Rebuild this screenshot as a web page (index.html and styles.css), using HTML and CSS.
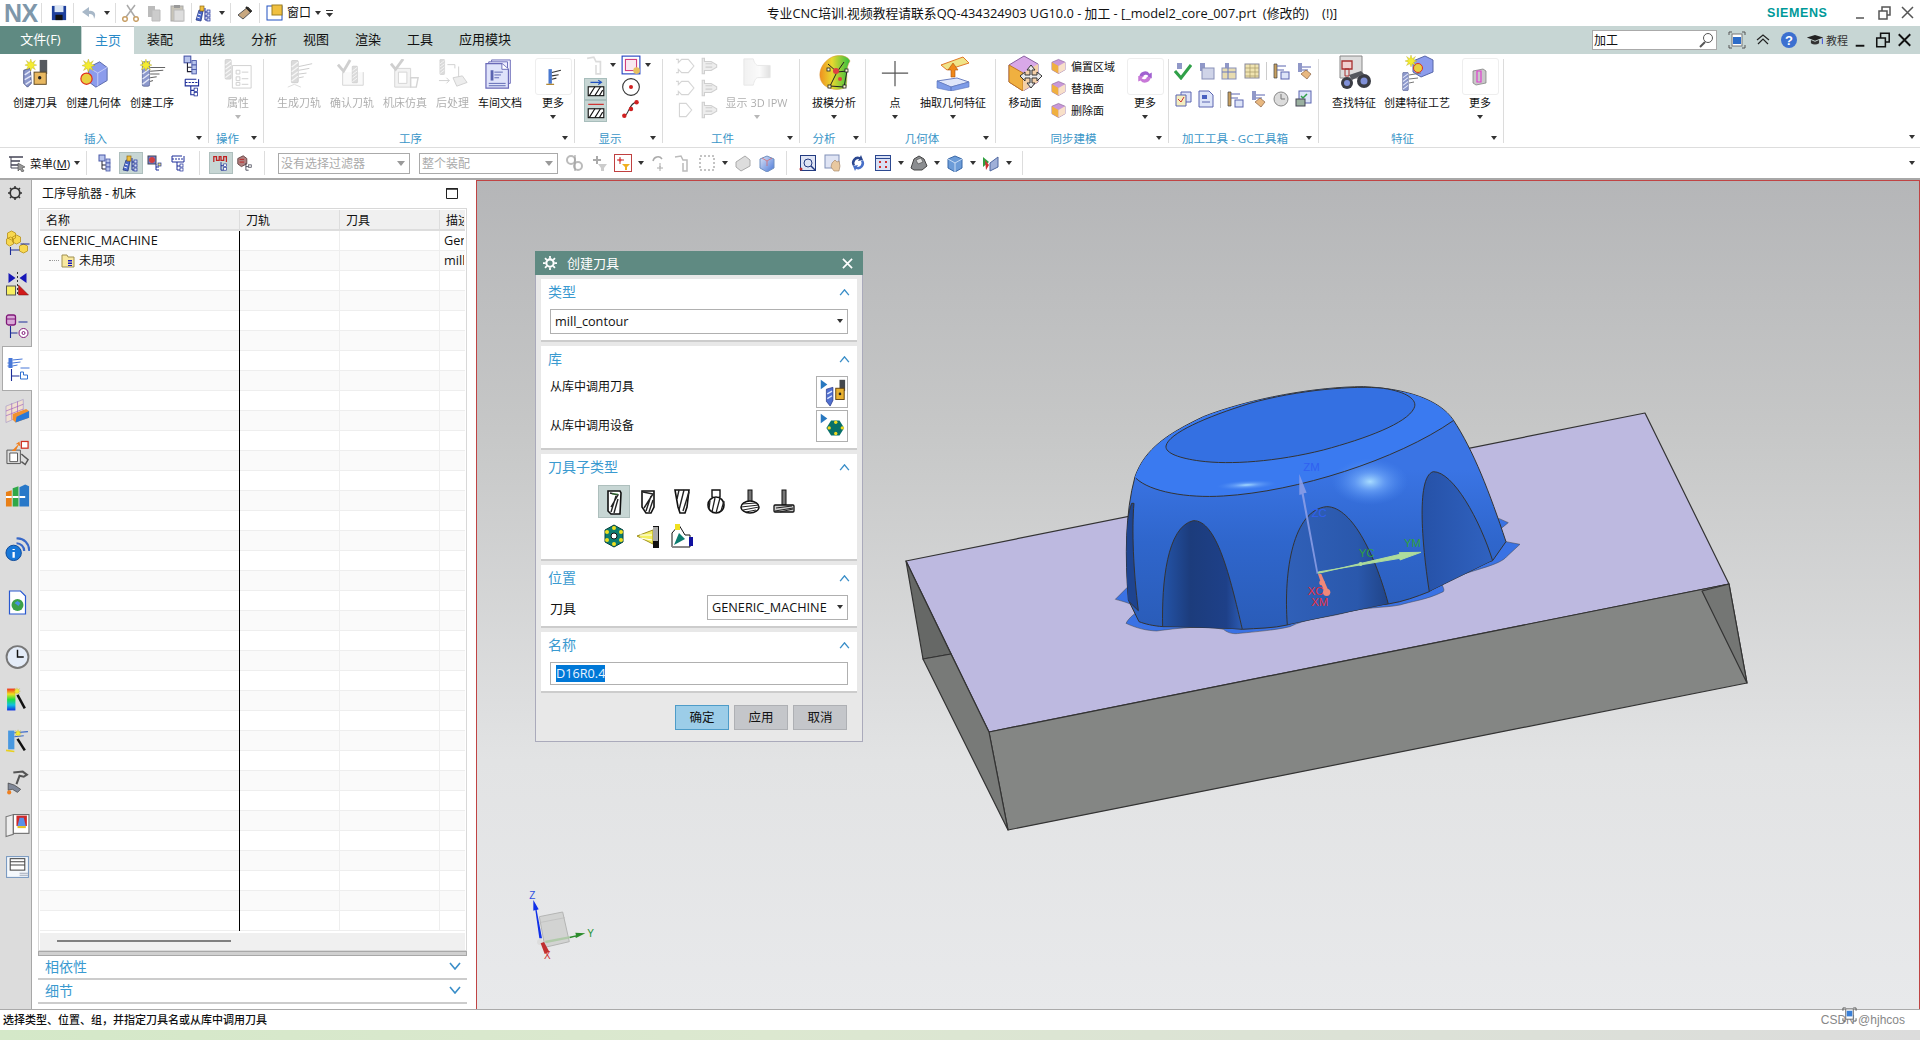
FILE: index.html
```html
<!DOCTYPE html>
<html lang="zh">
<head>
<meta charset="utf-8">
<title>NX</title>
<link rel="stylesheet" href="styles.css">
</head>
<body>
<svg class="defs" width="0" height="0">
  <defs>
    <linearGradient id="gSteel" x1="0" y1="0" x2="1" y2="0"><stop offset="0" stop-color="#d8d8d8"/><stop offset=".6" stop-color="#f4f4f4"/><stop offset="1" stop-color="#a8a8a8"/></linearGradient>
    <linearGradient id="gRain" x1="0" y1="0" x2="0" y2="1"><stop offset="0" stop-color="#f03020"/><stop offset=".25" stop-color="#f0e020"/><stop offset=".5" stop-color="#20e040"/><stop offset=".75" stop-color="#10c0e0"/><stop offset="1" stop-color="#1030e0"/></linearGradient>
    <linearGradient id="gDraft" x1="0" y1="0" x2="1" y2="0"><stop offset="0" stop-color="#f09020"/><stop offset=".4" stop-color="#e8d830"/><stop offset="1" stop-color="#30c040"/></linearGradient>
    <linearGradient id="gCube" x1="0" y1="0" x2="1" y2="1"><stop offset="0" stop-color="#dfe6f8"/><stop offset="1" stop-color="#4a78d8"/></linearGradient>
    <symbol id="star" viewBox="0 0 16 16"><path d="M8 0l1.6 5L14 2l-2.500 4.400L16 8l-4.500 1.500L14 14l-4.400-2.500L8 16l-1.600-4.500L2 14l2.500-4.500L0 8l4.500-1.600L2 2l4.400 3z" fill="#f4ec30" stroke="#a89a18" stroke-width=".4"/></symbol>
    <symbol id="drill" viewBox="0 0 10 30"><rect x=".5" y=".5" width="9" height="29" rx="2" fill="#8c98cc" stroke="#4c5688" stroke-width=".8"/><path d="M1 9l8-6M1 15l8-6M1 21l8-6M1 27l8-6" stroke="#e4e8f8" stroke-width="1.600"/></symbol>
    <symbol id="i-tool" viewBox="0 0 32 32"><path d="M4 12l7-2 1 16-4 4-4-4z" fill="#8c98cc" stroke="#4c5688"/><path d="M5 17l6-4M5 22l7-4M6 27l6-4" stroke="#e4e8f8" stroke-width="1.500"/><rect x="21" y="1" width="8" height="15" fill="#55595e"/><rect x="15" y="14" width="13" height="13" fill="#e8b860" stroke="#5a4520"/><circle cx="21" cy="20" r="1.800" fill="#222"/><use href="#star" x="5" y="0" width="13" height="13"/></symbol>
    <symbol id="i-geom" viewBox="0 0 32 32"><path d="M10 9l12-6 8 6v14l-12 7-8-6z" fill="#8c9cec" stroke="#5666a8"/><path d="M10 9l10 6 10-6M20 15v14" stroke="#c8d0f8" fill="none"/><circle cx="8" cy="21" r="6" fill="#e8d040" stroke="#e03020" stroke-width="1.300"/><use href="#star" x="3" y="0" width="14" height="14"/></symbol>
    <symbol id="i-oper" viewBox="0 0 32 32"><use href="#drill" x="5" y="2" width="9" height="28"/><path d="M14 9h16M14 13l14-1M14 16l10 0M14 20l7-1M14 24l3-1" stroke="#666" stroke-width="1.200" fill="none"/><use href="#star" x="3" y="0" width="13" height="13"/></symbol>
    <symbol id="i-props" viewBox="0 0 32 32"><use href="#drill" x="1" y="0" width="9" height="22"/><path d="M10 7h20v24H10z" fill="#fff" stroke="#777"/><path d="M14 12h4v4h-4zM14 19h4v4h-4zM14 25h4v3h-4zM20 14h7M20 21h7M20 27h7" stroke="#777" fill="none"/></symbol>
    <symbol id="i-gen" viewBox="0 0 32 32"><use href="#drill" x="7" y="1" width="9" height="25"/><path d="M16 8l14-3M16 12l11-2M16 16l8-1M16 20l5-1" stroke="#666" fill="none"/><path d="M4 30l7-3 7 3" stroke="#999" fill="none"/></symbol>
    <symbol id="i-verify" viewBox="0 0 32 32"><path d="M6 14v14h22V14" fill="#eee" stroke="#888"/><path d="M1 6l6 7L14 1" stroke="#777" stroke-width="3" fill="none"/><use href="#drill" x="15" y="7" width="8" height="19"/></symbol>
    <symbol id="i-sim" viewBox="0 0 32 32"><path d="M5 10h17v20H5z" fill="#ddd" stroke="#888"/><path d="M9 14h9v12H9z" fill="#fff" stroke="#888"/><path d="M1 5l5 6L14 0" stroke="#777" stroke-width="3" fill="none"/><path d="M22 20h8l-2 10h-6z" fill="none" stroke="#888" stroke-width="1.500"/></symbol>
    <symbol id="i-post" viewBox="0 0 32 32"><use href="#drill" x="1" y="0" width="7" height="17"/><path d="M10 6h8v4M22 8v12M1 23h11l-3-3M12 23l-3 3" stroke="#777" fill="none"/><path d="M16 20l10-2 5 7-11 4z" fill="#ccc" stroke="#777"/></symbol>
    <symbol id="i-doc" viewBox="0 0 32 32"><path d="M7 1h20v25H7z" fill="#eef" stroke="#6a6ab8"/><path d="M4 3h20v25H4z" fill="#eef" stroke="#6a6ab8"/><path d="M1 5h17l7 6v20H1z" fill="#dfe3fa" stroke="#6a6ab8" stroke-width="1.300"/><path d="M18 5v6h7" fill="#fff" stroke="#6a6ab8"/><rect x="6" y="12" width="3" height="11" fill="#5a64b0"/><path d="M10 14h9M10 17h7M10 20h5M4 26h18M4 28.500h18" stroke="#5a64b0" fill="none"/></symbol>
    <symbol id="i-opsm" viewBox="0 0 16 16"><rect x="4" y="1" width="3" height="13" fill="#4878d0"/><path d="M7 4l8-2M7 7l6-1M7 10l4-1" stroke="#333" fill="none"/><path d="M2 14.500h7" stroke="#a87818"/></symbol>
    <symbol id="i-ipw" viewBox="0 0 32 32"><path d="M2 2h10c1 4 3 7 5 7h13v13H17c-2 0-4 3-5 8H2z" fill="url(#gSteel)" stroke="#bbb"/></symbol>
    <symbol id="i-draft" viewBox="0 0 36 36"><path d="M8 30C0 22 4 8 16 2c8-3 16-1 18 4-5 7-2 17-4 26-6 4-16 3-22-2z" fill="url(#gDraft)" stroke="#d89030" stroke-width=".5"/><path d="M12 9l9 8-7 14 14 1 3-16-10 1 7-10" fill="none" stroke="#222"/><g fill="#e04040"><circle cx="20" cy="16" r="3"/><circle cx="24" cy="24" r="2"/></g><g fill="#fffbd8" stroke="#222" stroke-width=".8"><rect x="11" y="13" width="3" height="3"/><rect x="29" y="14" width="3" height="3"/><rect x="12" y="30" width="3" height="3"/><rect x="27" y="30" width="3" height="3"/></g></symbol>
    <symbol id="i-point" viewBox="0 0 32 32"><path d="M16 2v27M2 15h28" stroke="#555" stroke-width="1.300"/></symbol>
    <symbol id="i-extract" viewBox="0 0 36 36"><path d="M6 10L28 2l6 6-22 7z" fill="#f0e488" stroke="#e07828"/><path d="M16 22v-7h-3l5-7 5 7h-3v7z" fill="#f08818" stroke="#a85010" stroke-width=".6"/><path d="M2 26l20-3 12 4-18 5z" fill="#dfe6fa" stroke="#6c80c0"/><path d="M2 26v7l14 3v-4zM16 32v4l18-4v-5z" fill="#7e9ce8" stroke="#5c74b8" stroke-width=".6"/></symbol>
    <symbol id="i-move" viewBox="0 0 36 36"><path d="M2 10L17 1l14 8v18L16 36 2 27z" fill="#d8a8e8" stroke="#8860a0"/><path d="M2 10l14 8v18L2 27z" fill="#f0b040" stroke="#c07820"/><path d="M16 18l15-9v18L16 36z" fill="#f4d0a8"/><g fill="#e8e8e8" stroke="#333"><path d="M24 10l4 5h-3v5h5v-3l5 4-5 5v-3h-5v5h3l-4 5-4-5h3v-5h-5v3l-5-5 5-4v3h5v-5h-3z"/></g></symbol>
    <symbol id="i-syncface" viewBox="0 0 16 16"><path d="M1 4l7-3 7 3v8l-7 4-7-4z" fill="#c898d8" stroke="#886098" stroke-width=".7"/><path d="M1 4l7 4v8l-7-4z" fill="#f0b040"/><path d="M8 8l7-4v8l-7 4z" fill="#f8e0c8"/></symbol>
    <symbol id="i-rot" viewBox="0 0 16 16"><path d="M3 8a5 5 0 0 1 9-3l2-1v5h-5l2-2a3 3 0 0 0-5 1z" fill="#a060d0"/><path d="M13 8a5 5 0 0 1-9 3l-2 1V7h5L5 9a3 3 0 0 0 5-1z" fill="#c878d8"/></symbol>
    <symbol id="i-find" viewBox="0 0 36 36"><path d="M4 1h22v22H4z" fill="#ddd" stroke="#888"/><path d="M6 6h10v8H6z" fill="#f0d0d0" stroke="#a83030" stroke-width="1.300"/><path d="M9 14h4v7H9z" fill="none" stroke="#a83030"/><circle cx="11" cy="28" r="6" fill="#3a3c44"/><circle cx="28" cy="26" r="7" fill="#3a3c44"/><circle cx="11" cy="28" r="3" fill="#8090d8"/><circle cx="28" cy="26" r="3.500" fill="#8090d8"/><path d="M13 20l12-4 3 3-12 6z" fill="#55585e"/></symbol>
    <symbol id="i-feat" viewBox="0 0 36 36"><path d="M14 6l12-5 8 4v12l-12 5-8-5z" fill="#8c9cec" stroke="#5666a8"/><circle cx="19" cy="13" r="4.500" fill="#e8d040" stroke="#e03020"/><use href="#star" x="6" y="0" width="12" height="12"/><use href="#drill" x="3" y="17" width="7" height="19"/><path d="M10 20l12-2M10 24l9-1M10 28l5-1" stroke="#777" fill="none"/></symbol>
    <symbol id="i-morefeat" viewBox="0 0 16 18"><path d="M1 3l10-2 3 2v12L4 17l-3-2z" fill="#c8c8c8" stroke="#777" stroke-width=".7"/><path d="M5 3h4v11H5z" fill="none" stroke="#e040d0" stroke-width="1.200"/></symbol>
    <symbol id="s-struct" viewBox="0 0 18 18"><rect x="1" y="1" width="6" height="6" fill="#b8c4ec" stroke="#4858a8"/><path d="M4 7v8h4M4 11h4" stroke="#223" fill="none"/><rect x="8" y="5" width="4" height="4" fill="#b8c4ec" stroke="#4858a8" stroke-width=".8"/><rect x="8" y="9" width="4" height="4" fill="#b8c4ec" stroke="#4858a8" stroke-width=".8"/><rect x="8" y="13" width="4" height="4" fill="#b8c4ec" stroke="#4858a8" stroke-width=".8"/></symbol>
    <symbol id="s-tree" viewBox="0 0 18 18"><path d="M1 16l3-10 4 1-2 10z" fill="#4a68c8" stroke="#1c2c78" stroke-width=".7"/><path d="M3 10l3 1M2 13l3 1" stroke="#eef"/><rect x="5" y="2" width="4" height="5" fill="#f0c040" stroke="#906810" stroke-width=".7"/><path d="M10 4v12h3M10 8h3M10 12h3" stroke="#1c2c98" fill="none"/><rect x="12" y="6" width="3" height="3" fill="#d8e0f8" stroke="#1c2c98" stroke-width=".7"/><rect x="12" y="10" width="3" height="3" fill="#d8e0f8" stroke="#1c2c98" stroke-width=".7"/><rect x="12" y="14" width="3" height="3" fill="#d8e0f8" stroke="#1c2c98" stroke-width=".7"/></symbol>
    <symbol id="s-geo" viewBox="0 0 18 18"><rect x="2" y="2" width="8" height="8" fill="#7080d8" stroke="#445"/><circle cx="6" cy="6" r="3" fill="#d04040"/><path d="M10 10v6h3M10 13h3" stroke="#1c2c98" fill="none"/><rect x="12" y="9" width="3" height="3" fill="#e8e070" stroke="#1c2c98" stroke-width=".7"/></symbol>
    <symbol id="s-meth" viewBox="0 0 18 18"><path d="M2 2h10M2 2v6h12V2" stroke="#1c2c98" fill="none"/><path d="M2 5h12" stroke="#1c2c98" stroke-dasharray="2 1"/><path d="M7 8v8h3M7 12h3" stroke="#1c2c98" fill="none"/><rect x="10" y="10" width="3" height="3" fill="#fff" stroke="#1c2c98" stroke-width=".7"/><rect x="10" y="14" width="3" height="3" fill="#fff" stroke="#1c2c98" stroke-width=".7"/></symbol>
    <symbol id="s-order" viewBox="0 0 20 20"><path d="M2 9V3h3v4h3V3h2v4h3V3h3v6" stroke="#c02020" stroke-width="1.400" fill="none"/><path d="M10 9v9h3M10 13h3" stroke="#1c2c98" fill="none"/><rect x="13" y="11" width="3" height="3" fill="#fff" stroke="#1c2c98" stroke-width=".7"/><rect x="13" y="15" width="3" height="3" fill="#fff" stroke="#1c2c98" stroke-width=".7"/></symbol>
    <symbol id="s-order2" viewBox="0 0 20 20"><path d="M2 5l6-3 4 3v6l-6 3-4-3z" fill="#b08080" stroke="#604040"/><path d="M4 6h5M4 9h5" stroke="#c02020"/><path d="M11 10v8h3M11 14h3" stroke="#445" fill="none"/><rect x="14" y="12" width="3" height="3" fill="#ddd" stroke="#445" stroke-width=".7"/></symbol>
    <symbol id="s-gears" viewBox="0 0 18 18"><circle cx="5" cy="6" r="4" fill="none" stroke="#bbb" stroke-width="2"/><circle cx="12" cy="12" r="4" fill="none" stroke="#bbb" stroke-width="2"/><path d="M9 1v16" stroke="#999"/></symbol>
    <symbol id="s-filter" viewBox="0 0 18 18"><path d="M7 2v8M3 6h8" stroke="#aaa" stroke-width="2"/><path d="M8 10h9l-3 4v3h-3v-3z" fill="#ccc"/></symbol>
    <symbol id="s-redfilter" viewBox="0 0 18 18"><rect x=".5" y=".5" width="17" height="17" fill="#fff" stroke="#c04040"/><path d="M6 3v7M3 6h7" stroke="#c03030"/><circle cx="6" cy="6" r="1.500" fill="#e04040"/><path d="M8 10h8l-3 3v3h-2v-3z" fill="#f0b020"/></symbol>
    <symbol id="s-rotate" viewBox="0 0 18 18"><path d="M3 7a5 5 0 0 1 9-2" fill="none" stroke="#aaa" stroke-width="1.500"/><path d="M10 12v5M7 14h6M10 9v4" stroke="#aaa"/></symbol>
    <symbol id="s-tool2" viewBox="0 0 18 18"><path d="M1 3l6-1 2 4 4 0v11h-4V9" fill="none" stroke="#bbb" stroke-width="1.500"/></symbol>
    <symbol id="s-rect" viewBox="0 0 18 18"><rect x="2" y="2" width="14" height="14" fill="none" stroke="#888" stroke-dasharray="2 2"/></symbol>
    <symbol id="s-cube" viewBox="0 0 18 18"><path d="M2 8l9-6 5 4v6l-9 5-5-4z" fill="#ddd" stroke="#aaa"/></symbol>
    <symbol id="s-cube2" viewBox="0 0 18 18"><path d="M2 5l7-3 7 3v9l-7 4-7-4z" fill="url(#gCube)" stroke="#7090c0"/><path d="M4 4l5 3 5-3M9 7v5" stroke="#e06060" stroke-width=".7" fill="none"/></symbol>
    <symbol id="s-zoomfit" viewBox="0 0 18 18"><rect x="1.500" y="1.500" width="15" height="15" fill="#dfe4f4" stroke="#223a80"/><circle cx="9" cy="9" r="4" fill="none" stroke="#223a80"/><path d="M12 12l4 4" stroke="#223a80" stroke-width="1.500"/><circle cx="2" cy="15" r="1.500" fill="#c03030"/></symbol>
    <symbol id="s-pan" viewBox="0 0 18 18"><rect x="1" y="1" width="14" height="13" fill="#dfe4f4" stroke="#8090b8"/><path d="M8 9l3-3 2 2 2-1 1 5-1 5h-5l-3-4z" fill="#e8c8a0" stroke="#a08060" stroke-width=".6"/></symbol>
    <symbol id="s-spin" viewBox="0 0 18 18"><path d="M4 12A6 6 0 0 1 11 3l1-2 2 5-5 1 1-2a4 4 0 0 0-4 6z" fill="#2c4890"/><path d="M14 6a6 6 0 0 1-7 9l-1 2-2-5 5-1-1 2a4 4 0 0 0 4-6z" fill="#4870c8"/></symbol>
    <symbol id="s-view" viewBox="0 0 18 18"><rect x="1.500" y="1.500" width="15" height="15" fill="#d8e0f4" stroke="#2c4890"/><path d="M1.500 4.500h15" stroke="#2c4890"/><g fill="#d03030"><rect x="5" y="7" width="2" height="2"/><rect x="11" y="7" width="2" height="2"/><rect x="5" y="12" width="2" height="2"/><rect x="11" y="12" width="2" height="2"/></g></symbol>
    <symbol id="s-shade" viewBox="0 0 18 18"><path d="M1 14l3-9 5-3 5 3 3 7-5 4H4z" fill="#8b8d90" stroke="#444"/><path d="M6 6l5-2 2 4-5 2z" fill="#dfdfdf" stroke="#444" stroke-width=".6"/></symbol>
    <symbol id="s-bcube" viewBox="0 0 18 18"><path d="M2 5l7-3 7 3v9l-7 4-7-4z" fill="#6c9cd8" stroke="#3868a8"/><path d="M2 5l7 4 7-4M9 9v9" stroke="#c8dcf4" fill="none"/></symbol>
    <symbol id="s-mirror" viewBox="0 0 18 18"><path d="M1 3l6 5-6 5z" fill="#30a040"/><path d="M3 6l4 5-3 5z" fill="#d03030"/><path d="M8 9l8-6v10l-8 4z" fill="#a0b0d8" stroke="#5068a0"/></symbol>
    <symbol id="g-check" viewBox="0 0 18 18"><rect x="3" y="1" width="5" height="6" fill="#9098c8"/><path d="M1 9l6 7L17 3" fill="none" stroke="#30a048" stroke-width="3"/></symbol>
    <symbol id="g-a" viewBox="0 0 18 18"><rect x="3" y="1" width="5" height="8" fill="#9098c8"/><rect x="5" y="6" width="12" height="11" fill="#cfd4e8" stroke="#8890b8"/></symbol>
    <symbol id="g-b" viewBox="0 0 18 18"><rect x="5" y="1" width="4" height="8" fill="#9098c8"/><rect x="2" y="6" width="14" height="11" fill="#e8dcb0" stroke="#8890b8"/><path d="M2 10h14M8 6v11" stroke="#6878c0"/></symbol>
    <symbol id="g-c" viewBox="0 0 18 18"><rect x="2" y="2" width="14" height="14" fill="#f0e4b0" stroke="#889"/><path d="M2 6h14M2 10h14M2 14h14M7 2v14M12 2v14" stroke="#a89868" stroke-width=".7"/></symbol>
    <symbol id="g-d" viewBox="0 0 18 18"><path d="M7 2h10v10H7z" fill="#dfe3f8" stroke="#5a64b0"/><path d="M2 5h10v11H2z" fill="#f4eec0" stroke="#5a64b0"/><path d="M4 9l3 3 3-5" stroke="#d03030" fill="none"/></symbol>
    <symbol id="g-e" viewBox="0 0 18 18"><path d="M2 1h10l4 4v12H2z" fill="#dde4f8" stroke="#5a64b0"/><rect x="5" y="5" width="5" height="4" fill="#4860c0"/><path d="M5 12h8" stroke="#5a64b0"/></symbol>
    <symbol id="g-f" viewBox="0 0 18 18"><path d="M2 2h3v14H2z" fill="#c8a060" stroke="#444" stroke-width=".7"/><path d="M5 4h9M5 8h7" stroke="#5a64b0"/><rect x="9" y="10" width="8" height="7" fill="#dde4f8" stroke="#5a64b0"/></symbol>
    <symbol id="g-g" viewBox="0 0 18 18"><rect x="3" y="1" width="4" height="9" fill="#9098c8"/><path d="M7 5h9M7 8h6" stroke="#5a64b0"/><path d="M6 12l5-4 5 4-4 5z" fill="#e8b880" stroke="#886040" stroke-width=".7"/></symbol>
    <symbol id="g-h" viewBox="0 0 18 18"><circle cx="9" cy="9" r="7" fill="#dcdcdc" stroke="#888"/><path d="M9 4v5h4" stroke="#777" fill="none"/></symbol>
    <symbol id="g-i" viewBox="0 0 18 18"><rect x="4" y="1" width="12" height="12" fill="#dde4f8" stroke="#5a64b0"/><path d="M6 6l2 2 4-4" stroke="#30a048" stroke-width="1.500" fill="none"/><rect x="1" y="9" width="9" height="7" fill="#9ab0a0" stroke="#445"/></symbol>
    <symbol id="d-lib1" viewBox="0 0 32 32"><path d="M4 3l7 5-7 5z" fill="#2878c0"/><path d="M10 13l7-2v14l-3 6-4-5z" fill="#5070d0" stroke="#203080" stroke-width=".7"/><path d="M11 18l5-3M11 23l5-3" stroke="#e0e8ff" stroke-width="1.400"/><rect x="24" y="3" width="6" height="12" fill="#44484c"/><rect x="20" y="12" width="9" height="12" fill="#e8b030" stroke="#604010"/><circle cx="24.500" cy="18" r="1.400" fill="#222"/></symbol>
    <symbol id="d-lib2" viewBox="0 0 32 32"><path d="M4 3l7 5-7 5z" fill="#2878c0"/><path d="M15 10h9l5 8-5 8h-9l-5-8z" fill="#087068"/><g fill="#f0d820"><circle cx="20" cy="12" r="1.800"/><circle cx="20" cy="24" r="1.800"/><circle cx="13" cy="18" r="1.800"/><circle cx="27" cy="18" r="1.800"/></g><circle cx="20" cy="18" r="2" fill="#087068"/></symbol>
    <symbol id="c1" viewBox="0 0 24 26"><path d="M6 2h12l1 2-1 21H9L6 22z" fill="#fff" stroke="#111" stroke-width="1.600"/><path d="M8 4l8 2-7 12M14 7l-5 16M16 10l-4 14" stroke="#222" stroke-width="1.400" fill="none"/><path d="M10 5h6" stroke="#4a4" stroke-width=".8"/></symbol>
    <symbol id="c2" viewBox="0 0 24 26"><path d="M6 2h12v16l-3 6h-5l-4-6z" fill="#fff" stroke="#111" stroke-width="1.600"/><path d="M7 3l10 2-9 14M15 7l-5 15M17 11l-4 12" stroke="#222" stroke-width="1.400" fill="none"/></symbol>
    <symbol id="c3" viewBox="0 0 24 26"><path d="M5 1h14l-2 17-2 6h-5l-2-6z" fill="#fff" stroke="#111" stroke-width="1.600"/><path d="M9 1L7 10M14 1L9 21M19 3L13 22" stroke="#222" stroke-width="1.400" fill="none"/></symbol>
    <symbol id="c4" viewBox="0 0 24 26"><path d="M8 1h8v7l-4 2-4-2z" fill="#fff" stroke="#111" stroke-width="1.400"/><circle cx="12" cy="16" r="8" fill="#fff" stroke="#111" stroke-width="1.600"/><path d="M6 12l-1 8M11 9L8 23M16 9l-4 15M20 12l-3 10" stroke="#222" stroke-width="1.300" fill="none"/></symbol>
    <symbol id="c5" viewBox="0 0 24 26"><rect x="10" y="1" width="4" height="13" fill="#777" stroke="#111"/><ellipse cx="12" cy="18" rx="9" ry="6" fill="#fff" stroke="#111" stroke-width="1.500"/><path d="M4 15l14-1M3 18l18-2M5 21l16-3M8 23l10-2" stroke="#222" fill="none"/></symbol>
    <symbol id="c6" viewBox="0 0 24 26"><rect x="10" y="1" width="4" height="15" fill="#777" stroke="#111"/><rect x="2" y="16" width="20" height="7" rx="1" fill="#ccc" stroke="#111" stroke-width="1.300"/><path d="M4 19l16-2M3 22l18-3M8 23l13-3" stroke="#222" fill="none"/></symbol>
    <symbol id="c7" viewBox="0 0 24 26"><path d="M12 2l9 5v12l-9 5-9-5V7z" fill="#0c7c70" stroke="#064038"/><circle cx="12" cy="13" r="3" fill="#fff" stroke="#111"/><g fill="#f0e020"><circle cx="12" cy="5" r="2"/><circle cx="12" cy="21" r="2"/><circle cx="5" cy="9" r="2"/><circle cx="19" cy="9" r="2"/><circle cx="5" cy="17" r="2"/><circle cx="19" cy="17" r="2"/></g></symbol>
    <symbol id="c8" viewBox="0 0 24 26"><path d="M1 13l16-6v14z" fill="#f4f060" stroke="#a09020"/><rect x="17" y="3" width="6" height="22" fill="#111"/><rect x="17" y="4" width="5" height="14" fill="#aaa"/><path d="M4 12l12 0M4 15l12 2" stroke="#fff"/></symbol>
    <symbol id="c9" viewBox="0 0 24 26"><path d="M2 24V10l7-8 6 10h5v12z" fill="#fff" stroke="#111"/><path d="M9 10l6 6-11 6z" fill="#0c7c70"/><rect x="19" y="14" width="4" height="9" fill="#1010a0"/><rect x="5" y="1" width="5" height="6" fill="#f0e020"/><path d="M2 24h18" stroke="#888" stroke-width="2" stroke-dasharray="1 1"/></symbol>
    <symbol id="r-a" viewBox="0 0 24 26"><g fill="#f8d850" stroke="#b89018" stroke-width=".8"><path d="M2 4l4-2 4 2v5l-4 2-4-2zM7 8l4-2 4 2v5l-4 2-4-2zM1 10l4-2 3 2v5l-4 2-3-2z"/><path d="M14 17l4-2 4 2v5l-4 2-4-2z"/></g><path d="M5 18v8M5 21h9M15 15h9" stroke="#1c2c98" stroke-width="1.100" fill="none"/></symbol>
    <symbol id="r-b" viewBox="0 0 24 26"><path d="M3 2l7 5-7 5zM21 2l-7 5 7 5z" fill="#1818b8"/><rect x="1" y="15" width="9" height="9" fill="#f8f060" stroke="#555"/><path d="M13 14l10 10H13z" fill="#d01818" stroke="#701010" stroke-width=".5"/><path d="M12 1v24" stroke="#333" stroke-dasharray="2 2"/></symbol>
    <symbol id="r-c" viewBox="0 0 24 26"><rect x="1" y="2" width="9" height="10" rx="2" fill="#d8a8d8" stroke="#801878" stroke-width="1.300"/><path d="M1 6h9" stroke="#801878"/><path d="M5 13v12M5 20h7M13 9h9" stroke="#1c2c98" stroke-width="1.100" fill="none"/><circle cx="18" cy="20" r="4.500" fill="#fff" stroke="#801878"/><circle cx="18" cy="20" r="1.500" fill="none" stroke="#801878"/></symbol>
    <symbol id="r-d" viewBox="0 0 24 26"><rect x="2" y="2" width="4" height="10" fill="#4878d8"/><path d="M1 7h5M1 10h5M6 4l10-1M6 7l8-1M6 10l5-1M14 12h9" stroke="#4878d8" fill="none"/><path d="M5 13v12M5 20h8" stroke="#1c2c98" stroke-width="1.100" fill="none"/><path d="M14 16h3v3h4v4h-7z" fill="#fff" stroke="#3070d0"/></symbol>
    <symbol id="r-e" viewBox="0 0 26 26"><path d="M1 8l18-7v16L1 25z" fill="#f0e0d0" stroke="#a898c8" stroke-width=".7"/><path d="M1 13l18-7M1 18l18-7M7 5v17M13 3v17" stroke="#a060c0" stroke-width=".7"/><path d="M8 16l14-5 3 2v7l-14 5-3-3z" fill="#f09030"/><path d="M12 19l13-6v7l-14 5z" fill="#2878d8"/></symbol>
    <symbol id="r-f" viewBox="0 0 26 26"><path d="M2 10h14v14H2z" fill="#ddd" stroke="#555"/><path d="M5 13h8v9H5z" fill="#fff" stroke="#555"/><path d="M7 11l7-7h-3l4-3 1 5-2-1-3 6" fill="#f08020"/><rect x="17" y="1" width="7" height="7" fill="#fff" stroke="#d03020" stroke-width="1.300"/><path d="M17 14l7 6-3 5-4-3" fill="none" stroke="#555" stroke-width="1.500"/></symbol>
    <symbol id="r-g" viewBox="0 0 26 26"><path d="M1 10l6-2v17H1z" fill="#e88018"/><path d="M8 6l6-2v21H8z" fill="#30a848"/><path d="M15 5l6-3 4 2v21H15z" fill="#2878c8"/><path d="M1 15h6M8 15h6M15 15h6" stroke="#fff" stroke-width="2"/></symbol>
    <symbol id="r-h" viewBox="0 0 26 26"><path d="M12 1a12 12 0 0 1 13 13" fill="none" stroke="#3868c8" stroke-width="2.200"/><path d="M12 6a8 8 0 0 1 8 8" fill="none" stroke="#3868c8" stroke-width="2.200"/><circle cx="9" cy="16" r="8" fill="#1878d8" stroke="#0c4898"/><path d="M9 12v1M9 15v6" stroke="#fff" stroke-width="2.400"/></symbol>
    <symbol id="r-i" viewBox="0 0 24 26"><path d="M4 1h11l5 5v18H4z" fill="#fff" stroke="#2858d0" stroke-width="1.200"/><circle cx="12" cy="15" r="6" fill="#3ca048"/><path d="M9 13l3-2 3 2-2 3z" fill="#4890e0"/></symbol>
    <symbol id="r-j" viewBox="0 0 24 24"><circle cx="12" cy="12" r="10.500" fill="#e4ecf8" stroke="#777" stroke-width="1.800"/><path d="M12 5v7h6" stroke="#111" stroke-width="1.400" fill="none"/></symbol>
    <symbol id="r-k" viewBox="0 0 24 24"><rect x="2" y="2" width="8" height="21" fill="url(#gRain)"/><path d="M12 8l7 13" stroke="#111" stroke-width="2.400"/><use href="#star" x="8" y="1" width="7" height="7"/></symbol>
    <symbol id="r-l" viewBox="0 0 24 24"><rect x="3" y="2" width="6" height="18" fill="#4898e0"/><path d="M9 4l13-1M9 8l9-1" stroke="#3868c8"/><path d="M12 10l7 11" stroke="#111" stroke-width="2.400"/><use href="#star" x="9" y="1" width="7" height="7"/><path d="M1 21l8 1" stroke="#e8d020" stroke-width="1.500"/></symbol>
    <symbol id="r-m" viewBox="0 0 24 24"><path d="M8 2l9-1 4 3-3 2-4-1-3 8" fill="none" stroke="#555" stroke-width="2"/><path d="M3 12l6 2 6 4-3 3-5-3-4 1z" fill="#808898" stroke="#333" stroke-width=".6"/><circle cx="4" cy="21" r="2" fill="#f08020"/></symbol>
    <symbol id="r-n" viewBox="0 0 24 24"><path d="M1 4l7-2v19l-7 2z" fill="#eee" stroke="#777"/><rect x="8" y="2" width="15" height="18" fill="#fff" stroke="#666"/><rect x="11" y="3" width="10" height="10" fill="#d02828"/><path d="M14 5h4l2 8h-8z" fill="#5890e8"/><path d="M12 14h8" stroke="#e8c020" stroke-width="2"/></symbol>
    <symbol id="r-o" viewBox="0 0 24 24"><rect x="1.500" y="2" width="21" height="20" fill="#f4f8fc" stroke="#7898c0"/><rect x="5" y="4" width="14" height="11" fill="#fff" stroke="#444"/><path d="M5 7h14M5 10h14" stroke="#444"/><path d="M14 18h8M14 20h8" stroke="#a0a8b8"/></symbol>
  </defs>
</svg>

<div class="app">
  <header class="qbar">
    <span class="nx">NX</span><i class="vsep vsep-a"></i>
    <svg class="qi qi-save" viewBox="0 0 18 18"><path d="M1 1h16v16H1z" fill="#1d3f9c"/><rect x="4" y="1" width="10" height="7" fill="#d8e4f4"/><rect x="5" y="11" width="8" height="6" fill="#111"/></svg><i class="vsep vsep-b"></i>
    <svg class="qi qi-undo" viewBox="0 0 18 18"><path d="M14 15c3-5 0-9-5-8V3L2 8l7 5V10c3 0 5 1 5 5z" fill="#a8b8c8"/></svg><i class="caret caret-q"></i><i class="vsep vsep-c"></i>
    <svg class="qi qi-cut" viewBox="0 0 18 18"><path d="M14 1L5 13M6 1l8 12" stroke="#aaa" stroke-width="1.500"/><circle cx="4" cy="15" r="2.300" fill="none" stroke="#c8a068" stroke-width="1.500"/><circle cx="15" cy="15" r="2.300" fill="none" stroke="#c8a068" stroke-width="1.500"/></svg>
    <svg class="qi qi-copy" viewBox="0 0 18 18"><path d="M3 2h7v11H3z" fill="#bbb"/><path d="M7 6h8v11H7z" fill="#ccc" stroke="#bbb"/></svg>
    <svg class="qi qi-paste" viewBox="0 0 18 18"><rect x="3" y="2" width="12" height="15" fill="#c8c4b8" stroke="#aaa"/><rect x="6" y="1" width="6" height="3" fill="#999"/><rect x="6" y="6" width="10" height="11" fill="#ddd" stroke="#bbb"/></svg><i class="vsep vsep-d"></i>
    <svg class="qi qi-tree"><use href="#s-tree"/></svg><i class="caret caret-q"></i><i class="vsep vsep-e"></i>
    <svg class="qi qi-touch" viewBox="0 0 18 18"><path d="M2 11l10-8 4 4-9 8z" fill="#c8a880" stroke="#555"/><path d="M10 3l5 5" stroke="#222" stroke-width="2"/></svg><i class="vsep vsep-f"></i>
    <svg class="qi qi-win" viewBox="0 0 18 18"><rect x="1" y="2" width="15" height="14" fill="#fff" stroke="#2050c0"/><rect x="6" y="1" width="10" height="10" fill="#f0c040" stroke="#a08020"/></svg>
    <span class="qtext">窗口</span><i class="caret caret-w"></i>
    <svg class="qmore" viewBox="0 0 7 7"><path d="M0 .5h7" stroke="#333"/><path d="M0 3h7L3.500 7z" fill="#333"/></svg>
    <div class="wintitle">专业CNC培训.视频教程请联系QQ-434324903 UG10.0 - 加工 - [_model2_core_007.prt &nbsp;(修改的) &nbsp;&nbsp;&nbsp;(!)]</div>
    <span class="siemens">SIEMENS</span>
    <svg class="wc" viewBox="0 0 24 24"><path d="M8 17h8" stroke="#555" stroke-width="1.500"/></svg>
    <svg class="wc" viewBox="0 0 24 24"><path d="M7 10h8v8H7zM10 10V6h8v8h-3" fill="none" stroke="#555" stroke-width="1.500"/></svg>
    <svg class="wc" viewBox="0 0 24 24"><path d="M6 6l11 11M17 6L6 17" stroke="#555" stroke-width="1.500"/></svg>
  </header>

  <nav class="tabs">
    <div class="tab-file">文件(F)</div>
    <div class="tab tab-on">主页</div><div class="tab">装配</div><div class="tab">曲线</div><div class="tab">分析</div><div class="tab">视图</div><div class="tab">渲染</div><div class="tab">工具</div><div class="tab">应用模块</div>
    <div class="tabs-right">
      <div class="search"><span>加工</span><svg class="search-i" viewBox="0 0 16 16"><circle cx="10" cy="6" r="4.500" fill="#fff" stroke="#555"/><path d="M7 10l-5 5" stroke="#555" stroke-width="2"/></svg></div>
      <svg class="ti" viewBox="0 0 18 18"><path d="M1 4V1h3M14 1h3v3M17 14v3h-3M4 17H1v-3" stroke="#555" fill="none"/><rect x="4" y="3" width="10" height="12" fill="#fff" stroke="#777"/><rect x="5" y="6" width="8" height="7" fill="#2c6cc8"/></svg>
      <svg class="ti" viewBox="0 0 18 18"><path d="M3 9l6-5 6 5M4 13l5-5 5 5" stroke="#222" stroke-width="1.200" fill="none"/></svg>
      <svg class="ti" viewBox="0 0 18 18"><circle cx="9" cy="9" r="8" fill="#3c70d0"/><text class="ti-q" x="9" y="13.500">?</text></svg>
      <svg class="ti" viewBox="0 0 22 18"><path d="M1 6l10-3 10 3-10 4z" fill="#222"/><path d="M6 9v4c3 2 7 2 10 0V9l-5 2z" fill="#333"/><path d="M20 7v7" stroke="#2030e0"/></svg>
      <span class="ti-text">教程</span>
      <svg class="wc wc-t" viewBox="0 0 24 24"><path d="M7 18h9" stroke="#111" stroke-width="2"/></svg>
      <svg class="wc wc-t" viewBox="0 0 24 24"><path d="M6 10h9v9H6zM10 10V5h9v9h-4" fill="none" stroke="#111" stroke-width="1.600"/></svg>
      <svg class="wc wc-t" viewBox="0 0 24 24"><path d="M6 6l12 12M18 6L6 18" stroke="#111" stroke-width="2"/></svg>
    </div>
  </nav>

  <section class="ribbon">
    <div class="rg g-insert"><div class="rb">
      <div class="ri"><svg class="bi"><use href="#i-tool"/></svg><span>创建刀具</span></div>
      <div class="ri"><svg class="bi"><use href="#i-geom"/></svg><span>创建几何体</span></div>
      <div class="ri"><svg class="bi"><use href="#i-oper"/></svg><span>创建工序</span></div>
      <div class="sc sc-one"><svg class="si"><use href="#s-struct"/></svg><svg class="si"><use href="#s-meth"/></svg></div>
    </div><div class="rf"><span>插入</span><i class="caret"></i></div></div>

    <div class="rg g-op"><div class="rb">
      <div class="ri dis"><svg class="bi"><use href="#i-props"/></svg><span>属性</span><i class="caret"></i></div>
    </div><div class="rf"><span>操作</span><i class="caret"></i></div></div>

    <div class="rg g-proc"><div class="rb">
      <div class="ri dis"><svg class="bi"><use href="#i-gen"/></svg><span>生成刀轨</span></div>
      <div class="ri dis"><svg class="bi"><use href="#i-verify"/></svg><span>确认刀轨</span></div>
      <div class="ri dis"><svg class="bi"><use href="#i-sim"/></svg><span>机床仿真</span></div>
      <div class="ri dis"><svg class="bi"><use href="#i-post"/></svg><span>后处理</span></div>
      <div class="ri"><svg class="bi"><use href="#i-doc"/></svg><span>车间文档</span></div>
      <div class="ri ri-more"><div class="morebox"><svg class="mi"><use href="#i-opsm"/></svg></div><span>更多</span><i class="caret"></i></div>
    </div><div class="rf"><span>工序</span><i class="caret"></i></div></div>

    <div class="rg g-show"><div class="rb">
      <div class="sc sc-show1">
        <div class="sr"><svg class="si si-g"><use href="#s-tool2"/></svg><i class="caret"></i></div>
        <div class="sq"><svg class="si" viewBox="0 0 18 18"><path d="M4 3h10M11 1l3 2-3 2" stroke="#2050c0" fill="none"/><rect x="2" y="7" width="14" height="8" fill="#fff" stroke="#111"/><path d="M3 15l5-8M8 15l5-8M12 15l3-5" stroke="#111"/></svg></div>
        <div class="sq"><svg class="si" viewBox="0 0 18 18"><path d="M2 3h14" stroke="#d02020"/><rect x="2" y="7" width="14" height="8" fill="#fff" stroke="#111"/><path d="M3 15l5-8M8 15l5-8M12 15l3-5" stroke="#111"/></svg></div>
      </div>
      <div class="sc sc-show2">
        <div class="sr"><svg class="si" viewBox="0 0 18 18"><rect x="1" y="1" width="16" height="16" fill="#fff" stroke="#2040c0"/><rect x="4" y="4" width="10" height="10" fill="#f8e8f0" stroke="#d04080"/><circle cx="14" cy="14" r="3" fill="#e8c060"/></svg><i class="caret"></i></div>
        <div class="sr"><svg class="si" viewBox="0 0 18 18"><circle cx="9" cy="9" r="7.500" fill="#fff" stroke="#333"/><circle cx="9" cy="9" r="1.800" fill="#d02020"/></svg></div>
        <div class="sr"><svg class="si" viewBox="0 0 18 18"><path d="M3 15c4 0 4-12 11-12" fill="none" stroke="#333"/><circle cx="3" cy="15" r="2" fill="#d02020"/><circle cx="9" cy="9" r="2" fill="#d02020"/><circle cx="14" cy="3" r="2" fill="#d02020"/></svg></div>
      </div>
    </div><div class="rf"><span>显示</span><i class="caret"></i></div></div>

    <div class="rg g-work"><div class="rb">
      <div class="sc sc-w dis">
        <svg class="si" viewBox="0 0 18 18"><path d="M1 3h2v3l3-3h6l5 6-5 6H6l-3-3v3H1" fill="none" stroke="#888"/></svg>
        <svg class="si" viewBox="0 0 18 18"><path d="M1 3h2v3l3-3h6l5 6-5 6H6l-3-3v3H1" fill="none" stroke="#888"/></svg>
        <svg class="si" viewBox="0 0 18 18"><path d="M4 3h6l5 6-5 6H4z" fill="none" stroke="#888"/></svg>
      </div>
      <div class="sc sc-w dis">
        <svg class="si" viewBox="0 0 18 18"><path d="M2 2h2v3h6l5 3v2l-5 3H4v3H2z" fill="#ccc" stroke="#777"/><path d="M5 7h6M5 10h6" stroke="#777"/></svg>
        <svg class="si" viewBox="0 0 18 18"><path d="M2 2h2v3h6l5 3v2l-5 3H4v3H2z" fill="#ccc" stroke="#777"/><path d="M5 7h6M5 10h6" stroke="#777"/></svg>
        <svg class="si" viewBox="0 0 18 18"><path d="M2 2h2v3h6l5 3v2l-5 3H4v3H2z" fill="#ccc" stroke="#777"/><path d="M5 7h6M5 10h6" stroke="#777"/></svg>
      </div>
      <div class="ri ri-ipw dis"><svg class="bi"><use href="#i-ipw"/></svg><span>显示 3D IPW</span><i class="caret"></i></div>
    </div><div class="rf"><span>工件</span><i class="caret"></i></div></div>

    <div class="rg g-ana"><div class="rb">
      <div class="ri"><svg class="bi bi-l"><use href="#i-draft"/></svg><span>拔模分析</span><i class="caret"></i></div>
    </div><div class="rf"><span>分析</span><i class="caret"></i></div></div>

    <div class="rg g-geo"><div class="rb">
      <div class="ri"><svg class="bi"><use href="#i-point"/></svg><span>点</span><i class="caret"></i></div>
      <div class="ri"><svg class="bi bi-l"><use href="#i-extract"/></svg><span>抽取几何特征</span><i class="caret"></i></div>
    </div><div class="rf"><span>几何体</span><i class="caret"></i></div></div>

    <div class="rg g-sync"><div class="rb">
      <div class="ri"><svg class="bi bi-l"><use href="#i-move"/></svg><span>移动面</span></div>
      <div class="sc sc-sync">
        <div class="sl"><svg class="sm"><use href="#i-syncface"/></svg><span>偏置区域</span></div>
        <div class="sl"><svg class="sm"><use href="#i-syncface"/></svg><span>替换面</span></div>
        <div class="sl"><svg class="sm"><use href="#i-syncface"/></svg><span>删除面</span></div>
      </div>
      <div class="ri ri-more"><div class="morebox"><svg class="mi"><use href="#i-rot"/></svg></div><span>更多</span><i class="caret"></i></div>
    </div><div class="rf"><span>同步建模</span><i class="caret"></i></div></div>

    <div class="rg g-gc"><div class="rb rb-gc">
      <div class="gcrow">
        <svg class="gi"><use href="#g-check"/></svg><svg class="gi"><use href="#g-a"/></svg><svg class="gi"><use href="#g-b"/></svg><svg class="gi"><use href="#g-c"/></svg><i class="gsep"></i><svg class="gi"><use href="#g-f"/></svg><svg class="gi"><use href="#g-g"/></svg>
      </div>
      <div class="gcrow">
        <svg class="gi"><use href="#g-d"/></svg><svg class="gi"><use href="#g-e"/></svg><i class="gsep"></i><svg class="gi"><use href="#g-f"/></svg><svg class="gi"><use href="#g-g"/></svg><svg class="gi"><use href="#g-h"/></svg><svg class="gi"><use href="#g-i"/></svg>
      </div>
    </div><div class="rf"><span>加工工具 - GC工具箱</span><i class="caret"></i></div></div>

    <div class="rg g-feat"><div class="rb">
      <div class="ri"><svg class="bi bi-l"><use href="#i-find"/></svg><span>查找特征</span></div>
      <div class="ri"><svg class="bi bi-l"><use href="#i-feat"/></svg><span>创建特征工艺</span></div>
      <div class="ri ri-more"><div class="morebox"><svg class="mi"><use href="#i-morefeat"/></svg></div><span>更多</span><i class="caret"></i></div>
    </div><div class="rf"><span>特征</span><i class="caret"></i></div></div>

    <i class="caret rib-end"></i>
  </section>

  <section class="toolbar">
    <svg class="tb-menu-i" viewBox="0 0 18 18"><path d="M1 3h14M3 7h9M3 11h7" stroke="#445" stroke-width="1.300"/><path d="M3 3v11h7" stroke="#445" fill="none"/><path d="M10 9l7 4-3 1 2 3-2 1-2-3-2 2z" fill="#999" stroke="#333" stroke-width=".5"/></svg>
    <span class="tb-menu">菜单(<u>M</u>)</span><i class="caret tb-c0"></i><i class="tsep tsep-a"></i>
    <div class="s24"><svg class="tbi"><use href="#s-struct"/></svg></div>
    <div class="s24 on"><svg class="tbi"><use href="#s-tree"/></svg></div>
    <div class="s24"><svg class="tbi"><use href="#s-geo"/></svg></div>
    <div class="s24"><svg class="tbi"><use href="#s-meth"/></svg></div>
    <i class="tsep tsep-b"></i>
    <div class="s24 on"><svg class="tbi"><use href="#s-order"/></svg></div>
    <div class="s24"><svg class="tbi"><use href="#s-order2"/></svg></div>
    <i class="tsep tsep-c"></i>
    <div class="fsel fsel-a"><span>没有选择过滤器</span><i class="caret caret-g"></i></div>
    <div class="fsel fsel-b"><span>整个装配</span><i class="caret caret-g"></i></div>
    <div class="s24 s-first"><svg class="tbi"><use href="#s-gears"/></svg></div>
    <div class="s24"><svg class="tbi"><use href="#s-filter"/></svg></div>
    <div class="s24"><svg class="tbi"><use href="#s-redfilter"/></svg></div>
    <div class="c12"><i class="caret"></i></div>
    <div class="s24"><svg class="tbi"><use href="#s-rotate"/></svg></div>
    <div class="s24"><svg class="tbi"><use href="#s-tool2"/></svg></div>
    <div class="s24"><svg class="tbi"><use href="#s-rect"/></svg></div>
    <div class="c12"><i class="caret"></i></div>
    <div class="s24"><svg class="tbi"><use href="#s-cube"/></svg></div>
    <div class="s24"><svg class="tbi"><use href="#s-cube2"/></svg></div>
    <i class="tsep tsep-d"></i>
    <div class="s25"><svg class="tbi"><use href="#s-zoomfit"/></svg></div>
    <div class="s25"><svg class="tbi"><use href="#s-pan"/></svg></div>
    <div class="s25"><svg class="tbi"><use href="#s-spin"/></svg></div>
    <div class="s25"><svg class="tbi"><use href="#s-view"/></svg></div>
    <div class="c12"><i class="caret"></i></div>
    <div class="s24"><svg class="tbi"><use href="#s-shade"/></svg></div>
    <div class="c12"><i class="caret"></i></div>
    <div class="s24"><svg class="tbi"><use href="#s-bcube"/></svg></div>
    <div class="c12"><i class="caret"></i></div>
    <div class="s24"><svg class="tbi"><use href="#s-mirror"/></svg></div>
    <div class="c12"><i class="caret"></i></div>
    <i class="tsep tsep-e"></i>
    <i class="caret tb-end"></i>
  </section>

  <main class="main">
    <aside class="rail">
      <div class="rail-gear"><svg class="ri-gear" viewBox="0 0 16 16"><circle cx="8" cy="8" r="4.800" fill="none" stroke="#333" stroke-width="1.700"/><path d="M8 1v2M8 13v2M1 8h2M13 8h2M3 3l1.500 1.500M11.500 11.500L13 13M3 13l1.500-1.500M11.500 4.500L13 3" stroke="#333" stroke-width="1.500"/></svg></div>
      <div class="rail-i first"><svg class="rsvg"><use href="#r-a"/></svg></div>
      <div class="rail-i"><svg class="rsvg"><use href="#r-b"/></svg></div>
      <div class="rail-i"><svg class="rsvg"><use href="#r-c"/></svg></div>
      <div class="rail-i rail-on"><svg class="rsvg"><use href="#r-d"/></svg></div>
      <div class="rail-i"><svg class="rsvg"><use href="#r-e"/></svg></div>
      <div class="rail-i"><svg class="rsvg"><use href="#r-f"/></svg></div>
      <div class="rail-i"><svg class="rsvg"><use href="#r-g"/></svg></div>
      <div class="rail-i gap13"><svg class="rsvg"><use href="#r-h"/></svg></div>
      <div class="rail-i gap11"><svg class="rsvg"><use href="#r-i"/></svg></div>
      <div class="rail-i gap12"><svg class="rsvg"><use href="#r-j"/></svg></div>
      <div class="rail-i"><svg class="rsvg"><use href="#r-k"/></svg></div>
      <div class="rail-i"><svg class="rsvg"><use href="#r-l"/></svg></div>
      <div class="rail-i"><svg class="rsvg"><use href="#r-m"/></svg></div>
      <div class="rail-i"><svg class="rsvg"><use href="#r-n"/></svg></div>
      <div class="rail-i"><svg class="rsvg"><use href="#r-o"/></svg></div>
    </aside>

    <section class="nav">
      <div class="nav-title"><span>工序导航器 - 机床</span><svg class="nav-max" viewBox="0 0 12 12"><path d="M.5 1.500h11v10H.5z" fill="#fff" stroke="#222"/><path d="M0 2h12" stroke="#222" stroke-width="1.500"/></svg></div>
      <div class="tree">
        <div class="tr th"><div>名称</div><div>刀轨</div><div>刀具</div><div>描述</div></div>
        <div class="tbody">
          <div class="tr"><div class="first">GENERIC_MACHINE</div><div></div><div></div><div class="last">Generic Machine</div></div>
          <div class="tr alt"><div class="first ind"><i class="dots"></i><svg class="folder" viewBox="0 0 14 14"><path d="M1 3V1h5l1 2h6v10H1z" fill="#f8e8a0" stroke="#a09050"/><path d="M7 6h4v1.500H7zM7 8.500h4V10H7zM7 11h4v1H7z" fill="#1818c0"/></svg><span>未用项</span></div><div></div><div></div><div class="last">mill_contour</div></div>
          <div class="tfill"></div>
        </div>
        <div class="hscroll"><div class="hthumb"></div></div>
      </div>
      <div class="sash"></div>
      <div class="acc"><span>相依性</span><svg class="chev" viewBox="0 0 12 8"><path d="M1 1l5 6 5-6" fill="none" stroke="#3a8ec8" stroke-width="1.600"/></svg></div>
      <div class="acc"><span>细节</span><svg class="chev" viewBox="0 0 12 8"><path d="M1 1l5 6 5-6" fill="none" stroke="#3a8ec8" stroke-width="1.600"/></svg></div>
    </section>

    <section class="view">
      <svg class="scene" viewBox="477 181 1442 828" preserveAspectRatio="none">
        <defs>
          <linearGradient id="bodyG" gradientUnits="userSpaceOnUse" x1="0" y1="300" x2="0" y2="780"><stop offset="0" stop-color="#3a74e4"/><stop offset=".45" stop-color="#2f66cc"/><stop offset="1" stop-color="#2a5cb8"/></linearGradient>
          <linearGradient id="archG" x1="0" y1="0" x2="1" y2="0"><stop offset="0" stop-color="#2454a8"/><stop offset=".35" stop-color="#1c3c7c"/><stop offset=".8" stop-color="#1e4088"/><stop offset="1" stop-color="#2c5cb4"/></linearGradient>
          <linearGradient id="archG2" x1="0" y1="0" x2="1" y2="0"><stop offset="0" stop-color="#3060b8"/><stop offset=".7" stop-color="#2a58ac"/><stop offset="1" stop-color="#204488"/></linearGradient>
          <linearGradient id="archG3" x1="0" y1="0" x2="1" y2="0"><stop offset="0" stop-color="#2652a8"/><stop offset="1" stop-color="#3062c0"/></linearGradient>
          <radialGradient id="glow"><stop offset="0" stop-color="#a8dcff"/><stop offset=".4" stop-color="#70a8fa" stop-opacity=".7"/><stop offset="1" stop-color="#4a88f0" stop-opacity="0"/></radialGradient>
          <clipPath id="bodyClip"><path d="M135 320C165 235 235 190 340 140C480 85 680 50 820 50C950 55 1050 90 1090 150C1150 240 1200 370 1248 515L1208 572L1018 665L895 702L592 765L457 778L220 770L147 755L115 690C105 560 105 430 135 320Z"/></clipPath>
        </defs>
        <g stroke="#333" stroke-width="1.200" stroke-linejoin="round">
          <path d="M906 561L1645 413L1729 584L989 732Z" fill="#bdb9e0"/>
          <path d="M989 732L1729 584L1747 683L1008 830Z" fill="#848684"/>
          <path d="M906 561L951 654L923 659Z" fill="#666866"/>
          <path d="M923 659L951 654L989 732L1008 830Z" fill="#787a78"/>
          <path d="M1729 584L1702 591L1747 683Z" fill="#747674"/>
        </g>
        <g transform="translate(1090 370) scale(.3333)">
          <path d="M112 652L76 688C100 695 130 700 145 722C130 735 115 745 108 760C140 775 170 782 200 783C260 775 340 765 400 778C415 790 430 793 450 790C500 785 560 780 600 770C650 745 700 745 760 730C820 710 880 715 930 705C960 695 1010 690 1060 665C1070 650 1030 640 1100 620C1150 600 1230 585 1250 560L1290 523L1248 515L1228 480L1255 458L1228 446L200 500Z" fill="#3a72e4" stroke="#444" stroke-width="1.500"/>
          <path d="M135 320C165 235 235 190 340 140C480 85 680 50 820 50C950 55 1050 90 1090 150C1150 240 1200 370 1248 515L1208 572C1140 590 1060 630 1018 665C980 680 940 695 895 702C800 710 680 735 592 765C550 775 500 775 457 778C380 770 300 770 220 770C190 768 165 762 147 755L115 690C105 560 105 430 135 320Z" fill="url(#bodyG)" stroke="#333" stroke-width="3"/>
          <g clip-path="url(#bodyClip)">
            <path d="M135 320C165 235 235 190 340 140C480 85 680 50 820 50C950 55 1050 90 1090 150C920 270 620 365 400 378C290 385 180 365 138 325Z" fill="#3a7af0"/>
            <ellipse cx="470" cy="345" rx="90" ry="14" fill="url(#glow)" transform="rotate(-3 470 345)"/>
            <ellipse cx="840" cy="335" rx="115" ry="70" fill="url(#glow)"/>
            <path d="M112 690C103 560 105 450 125 400L132 400C125 480 130 600 145 722Z" fill="#1e4490" stroke="#333" stroke-width="3"/>
            <path d="M218 770C215 640 230 470 310 452C380 450 420 620 457 778Z" fill="url(#archG)" stroke="#333" stroke-width="3"/>
            <path d="M592 765C580 600 610 420 710 410C790 410 860 570 895 702Z" fill="url(#archG2)" stroke="#333" stroke-width="3"/>
            <path d="M1018 665C1000 550 975 320 1030 305C1090 305 1170 450 1208 572Z" fill="url(#archG3)" stroke="#333" stroke-width="3"/>
          </g>
          <path d="M228 228C235 190 350 140 480 100C620 60 800 45 880 55C950 65 985 90 972 115C950 160 830 205 700 240C560 275 420 285 330 273C270 265 225 250 228 228Z" fill="#3470e2" stroke="#333" stroke-width="3"/>
          <path d="M138 325C180 365 290 385 400 378C620 365 920 270 1090 152" fill="none" stroke="#333" stroke-width="3"/>
          <path d="M685 610L641 370L650 368L628 312L628 375L635 373L680 612Z" fill="#8ea0e8" opacity=".85"/>
          <path d="M685 606L930 565L930 570L993 547L928 548L930 553L685 610Z" fill="#aedc9c" stroke="#aedc9c" stroke-width="3"/>
          <circle cx="812" cy="582" r="6" fill="#aedc9c"/>
          <path d="M684 612L694 612L718 668L706 676Z" fill="#f08878"/>
          <circle cx="696" cy="638" r="8" fill="#f08878"/><circle cx="710" cy="667" r="11" fill="#f08878"/>
          <text class="c-b" x="640" y="303">ZM</text><text class="c-b" x="665" y="442">ZC</text>
          <text class="c-g" x="806" y="561">YC</text><text class="c-g" x="942" y="531">YM</text>
          <text class="c-r" x="653" y="676">XC</text><text class="c-r" x="664" y="709">XM</text>
        </g>
        <g transform="translate(500 880) scale(.3333)">
          <path d="M118 110L188 96L208 185L135 202Z" fill="#d2d3d2" stroke="#b4b5b4" stroke-width="3"/>
          <path d="M118 128L195 113" stroke="#bbb" stroke-width="2"/>
          <path d="M136 186L208 172" stroke="#a8c8a0" stroke-width="7" opacity=".8"/>
          <path d="M208 170L228 166L226 158L256 160L228 174L226 170L210 175Z" fill="#2c8c2c"/>
          <path d="M118 175L106 90L100 92L100 60L116 88L110 90L126 175Z" fill="#1030e8"/>
          <circle cx="120" cy="186" r="9" fill="#ddd"/>
          <path d="M122 190L132 186L148 215L134 222Z" fill="#c03030"/>
          <text class="t-b" x="88" y="58">Z</text><text class="t-g" x="262" y="170">Y</text><text class="t-r" x="132" y="236">X</text>
        </g>
      </svg>

      <div class="dlg">
        <div class="dlg-head"><svg class="dlg-gear" viewBox="0 0 16 16"><circle cx="8" cy="8" r="4.200" fill="none" stroke="#fff" stroke-width="2.400"/><path d="M8 0v3M8 13v3M0 8h3M13 8h3M2.300 2.300l2 2M11.700 11.700l2 2M2.300 13.700l2-2M11.700 4.300l2-2" stroke="#fff" stroke-width="2"/></svg><span>创建刀具</span><svg class="dlg-x" viewBox="0 0 12 12"><path d="M1 1l10 10M11 1L1 11" stroke="#fff" stroke-width="1.800"/></svg></div>
        <div class="dlg-body">
          <div class="sec">
            <div class="sec-t"><span>类型</span><svg class="up" viewBox="0 0 12 8"><path d="M1 7l5-6 5 6" fill="none" stroke="#3a8ec8" stroke-width="1.600"/></svg></div>
            <div class="sel"><span>mill_contour</span><i class="caret"></i></div>
          </div>
          <div class="sec">
            <div class="sec-t"><span>库</span><svg class="up" viewBox="0 0 12 8"><path d="M1 7l5-6 5 6" fill="none" stroke="#3a8ec8" stroke-width="1.600"/></svg></div>
            <div class="lib"><span>从库中调用刀具</span><div class="libbtn"><svg class="libsvg"><use href="#d-lib1"/></svg></div></div>
            <div class="lib lib-b"><span>从库中调用设备</span><div class="libbtn"><svg class="libsvg"><use href="#d-lib2"/></svg></div></div>
          </div>
          <div class="sec">
            <div class="sec-t"><span>刀具子类型</span><svg class="up" viewBox="0 0 12 8"><path d="M1 7l5-6 5 6" fill="none" stroke="#3a8ec8" stroke-width="1.600"/></svg></div>
            <div class="subs">
              <div class="sub sub-on"><svg><use href="#c1"/></svg></div><div class="sub"><svg><use href="#c2"/></svg></div><div class="sub"><svg><use href="#c3"/></svg></div><div class="sub"><svg><use href="#c4"/></svg></div><div class="sub"><svg><use href="#c5"/></svg></div><div class="sub"><svg><use href="#c6"/></svg></div>
              <div class="sub"><svg><use href="#c7"/></svg></div><div class="sub"><svg><use href="#c8"/></svg></div><div class="sub"><svg><use href="#c9"/></svg></div>
            </div>
          </div>
          <div class="sec">
            <div class="sec-t"><span>位置</span><svg class="up" viewBox="0 0 12 8"><path d="M1 7l5-6 5 6" fill="none" stroke="#3a8ec8" stroke-width="1.600"/></svg></div>
            <div class="posrow"><span>刀具</span><div class="sel sel-m"><span>GENERIC_MACHINE</span><i class="caret"></i></div></div>
          </div>
          <div class="sec">
            <div class="sec-t"><span>名称</span><svg class="up" viewBox="0 0 12 8"><path d="M1 7l5-6 5 6" fill="none" stroke="#3a8ec8" stroke-width="1.600"/></svg></div>
            <div class="inp"><span class="selected">D16R0.4</span></div>
          </div>
          <div class="btns"><div class="btn btn-ok">确定</div><div class="btn">应用</div><div class="btn">取消</div></div>
        </div>
      </div>
    </section>
  </main>

  <footer class="status">
    <span>选择类型、位置、组，并指定刀具名或从库中调用刀具</span>
    <div class="wm"><svg class="wm-i" viewBox="0 0 16 16"><path d="M1 4V1h3M12 1h3v3M15 12v3h-3M4 15H1v-3" stroke="#555" fill="none"/><rect x="4" y="2" width="8" height="11" fill="#fff" stroke="#666"/><rect x="5" y="4" width="6" height="6" fill="#3a80d8"/></svg><span>CSDN @hjhcos</span></div>
  </footer>
  <div class="taskbar"></div>
</div>
</body>
</html>
```

FILE: styles.css
```css
*{box-sizing:border-box}
html,body{margin:0;padding:0;height:100%}
body{font-family:"Open Sans","Noto Sans CJK SC",sans-serif;color:#111;background:#fff;overflow:hidden}
.defs{position:absolute}
.app{width:1920px;height:1040px;display:flex;flex-direction:column;overflow:hidden}
i{display:block;font-style:normal}
svg{display:block;flex:none}
.caret{width:0;height:0;border-left:3px solid transparent;border-right:3px solid transparent;border-top:4px solid #333;flex:none}
.caret-g{border-top-color:#999;border-left-width:4px;border-right-width:4px;border-top-width:5px}

/* quick access */
.qbar{height:26px;display:flex;align-items:center;flex:none}
.nx{font:bold 25px/26px "Liberation Sans",sans-serif;color:#7f97aa;margin-left:4px;width:34px;letter-spacing:-.5px}
.vsep{width:1px;height:20px;background:#ddd;flex:none}
.vsep-a{margin-left:3px}
.qi{width:18px;height:18px}
.qi-save{margin-left:9px;width:16px;height:16px}
.vsep-b{margin-left:6px}
.qi-undo{margin-left:6px}
.caret-q{margin-left:6px}
.vsep-c{margin-left:5px}
.qi-cut{margin-left:5px}
.qi-copy{margin-left:6px}
.qi-paste{margin-left:5px}
.vsep-d{margin-left:5px}
.qi-tree{margin-left:3px}
.vsep-e{margin-left:5px}
.qi-touch{margin-left:5px}
.vsep-f{margin-left:5px}
.qi-win{margin-left:6px}
.qtext{font-size:12px;margin-left:3px;white-space:nowrap;flex:none;line-height:16px}
.caret-w{margin-left:4px}
.qmore{width:7px;height:7px;margin-left:5px}
.wintitle{flex:1;text-align:center;font-size:12.800px;white-space:nowrap;padding:0 0 2px 4px}
.siemens{font:bold 12.500px "Liberation Sans",sans-serif;color:#009999;letter-spacing:.6px;width:81px}
.wc{width:24px;height:24px}

/* tabs */
.tabs{height:28px;background:#c7d6d4;display:flex;align-items:stretch;flex:none}
.tab-file{width:81px;background:#5f8a82;color:#fff;font-size:13px;line-height:26px;text-align:center;margin-right:1px}
.tab{padding:0 13px;font-size:13px;line-height:26px}
.tab-on{background:#fff;color:#2a8ac8;border-top:1px solid #bbb}
.tabs-right{margin-left:auto;display:flex;align-items:center;padding-right:4px}
.search{width:125px;height:20px;border:1px solid #aaa;background:#fff;display:flex;align-items:center;justify-content:space-between;font-size:12px;padding:0 2px 0 1px;margin-right:7px}
.search-i{width:16px;height:16px}
.ti{width:18px;height:18px;margin:0 4px}
.ti-q{font:bold 13px "Liberation Sans",sans-serif;fill:#fff;text-anchor:middle}
.ti-text{font-size:11px;color:#333;margin-left:-2px;width:24px}
.wc-t{margin-left:-1px;width:23px;height:24px}

/* ribbon */
.ribbon{height:94px;display:flex;border-bottom:1px solid #ddd;flex:none;position:relative;font-size:11px}
.rg{height:93px;display:flex;flex-direction:column;background:linear-gradient(#dcdcdc,#dcdcdc) right 5px/1px 84px no-repeat;flex:none}
.rb{height:76px;display:flex}
.rf{height:17px;display:flex;align-items:center;justify-content:center;color:#3a96c8;font-size:11.500px;line-height:17px;padding-right:18px;position:relative}
.rf .caret{position:absolute;right:7px;top:6px}
.g-insert{width:209px}.g-insert .rb{padding-left:13px;gap:9px}
.g-op{width:55px}.g-op .rb{padding-left:14px}
.g-proc{width:311px}.g-proc .rb{padding-left:13px;gap:9px}
.g-show{width:88px}.g-show .rb{padding-left:9px}
.g-work{width:137px}.g-work .rb{padding-left:12px}
.g-ana{width:66px}.g-ana .rb{padding-left:12px}
.g-geo{width:130px}.g-geo .rb{padding-left:14px;gap:10px}
.g-sync{width:173px}.g-sync .rb{padding-left:11px}
.g-gc{width:150px}
.g-feat{width:185px}.g-feat .rb{padding-left:13px;gap:8px}
.ri{display:flex;flex-direction:column;align-items:center;padding-top:5px;white-space:nowrap;line-height:14px;flex:none}
.bi{width:30px;height:30px;margin-bottom:7px}
.bi-l{width:36px;height:36px;margin-top:-4px;margin-bottom:5px}
.ri .caret{margin-top:5px}
.dis{filter:grayscale(1);opacity:.35}
.ri-more{margin-left:3px;width:38px}
.morebox{width:37px;height:37px;margin-top:-1px;margin-bottom:1px;border:1px solid #eee;border-radius:3px;display:flex;align-items:center;justify-content:center}
.mi{width:18px;height:18px}
.sc{display:flex;flex-direction:column}
.sc-one{margin-left:0;padding-top:1px;gap:2px;width:22px}
.si{width:20px;height:20px}
.si-g{opacity:.5;filter:grayscale(1)}
.sr{height:22px;display:flex;align-items:center;gap:4px}
.sc-show1{width:24px}
.sc-show1 .sr{padding-left:2px;width:34px;margin-bottom:2px}
.sc-show1 .sq{width:23px;height:22px;background:#c7d6d4;border:1px solid #a8bebc;display:flex;align-items:center;justify-content:center}
.sc-show2{margin-left:13px}
.sc-w{padding-top:2px;gap:2px;margin-right:5px}
.ri-ipw{width:63px;padding-top:3px}
.ri-ipw .bi{margin-bottom:9px}
.sc-sync{margin-left:8px;padding-top:1px;width:75px;flex:none}
.sl{height:22px;display:flex;align-items:center;gap:5px;white-space:nowrap}
.sm{width:15px;height:16px}
.sc-sync + .ri-more{margin-left:0}
.rb-gc{flex-direction:column;padding:6px 0 0 5px;gap:6px}
.gcrow{display:flex;gap:5px;align-items:center;height:22px}
.gi{width:18px;height:18px}
.gsep{width:1px;height:18px;background:#ccc}
.rib-end{position:absolute;right:5px;top:81px}

/* toolbar */
.toolbar{height:30px;display:flex;align-items:center;flex:none;font-size:11px}
.tb-menu-i{width:18px;height:18px;margin-left:8px}
.tb-menu{margin-left:4px;width:40px;font-size:11.500px;white-space:nowrap}
.tb-c0{margin-left:4px}
.tsep{width:1px;height:24px;background:#ddd;flex:none}
.tsep-a{margin-left:6px;margin-right:8px}
.tsep-b{margin-left:8px;margin-right:9px}
.tsep-c{margin-left:7px;margin-right:13px}
.tsep-d{margin-left:7px;margin-right:8px}
.tsep-e{margin-left:7px}
.s24,.s25{height:22px;display:flex;align-items:center;justify-content:center;flex:none}
.s24{width:24px}.s25{width:25px}
.s-first{margin-left:5px}
.on{background:#c7d6d4;border:1px solid #aebfbd}
.tbi{width:18px;height:18px}
.c12{width:12px;display:flex;justify-content:center;flex:none}
.fsel{height:21px;border:1px solid #aaa;display:flex;align-items:center;justify-content:space-between;padding:0 4px 0 2px;color:#aaa;font-size:12px;flex:none}
.fsel-a{width:132px;margin-right:9px}
.fsel-b{width:139px}
.tb-end{margin-left:auto;margin-right:5px}

/* main */
.main{height:832px;display:flex;border-top:2px solid #a8a8a8;flex:none}
.rail{width:32px;background:#dcdcdc;border-right:1px solid #a8a8a8;flex:none}
.rail-gear{height:26px;display:flex;align-items:center;justify-content:center}
.ri-gear{width:16px;height:16px;margin-left:-1px}
.rail-i{height:42px;display:flex;align-items:center;justify-content:center;padding-left:3px}
.rail-i.first{margin-top:15px}
.rsvg{width:25px;height:26px}
.rail-on{background:#fff;width:31px;margin-left:2px;padding-left:1px;border:1px solid #aaa;border-right:0;height:45px;margin-top:-1px;margin-bottom:-1px}
.gap13{margin-top:13px}.gap11{margin-top:11px}.gap12{margin-top:12px}
.nav{width:444px;padding:0 9px 0 6px;flex:none;display:flex;flex-direction:column;background:#fff}
.nav-title{height:28px;display:flex;align-items:center;justify-content:space-between;font-size:12px;padding:0 9px 2px 4px;flex:none}
.nav-max{width:12px;height:12px}
.tree{height:743px;border:1px solid #d8d8d8;padding:1px 1px 0;flex:none;overflow:hidden}
.tr{display:grid;grid-template-columns:200px 100px 100px 24px;height:20px;border-bottom:1px solid #eee;font-size:12.700px;line-height:19px}
.tr>div{overflow:hidden;white-space:nowrap;border-right:1px solid #eee}
.tr>div:last-child{border-right:0}
.th{background:#f0f0f0;border-bottom:2px solid #ddd;height:21px;font-size:12px;line-height:21px}
.th>div{padding-left:6px;border-right-color:#ddd}
.first{padding-left:3px}
.last{padding-left:4px}
.alt{background:#fafafa}
.ind{display:flex;align-items:center;padding-left:9px;font-size:12px}
.dots{width:10px;border-top:1px dotted #999;margin-right:2px}
.folder{width:14px;height:14px;margin-right:4px}
.tbody{height:700px;position:relative}
.tbody::after{content:"";position:absolute;left:199px;top:0;bottom:0;width:1px;background:#000}
.tfill{height:660px;background:
  linear-gradient(#eee,#eee) 299px 0/1px 100% no-repeat,
  linear-gradient(#eee,#eee) 399px 0/1px 100% no-repeat,
  repeating-linear-gradient(#fff 0,#fff 19px,#eee 19px,#eee 20px,#fafafa 20px,#fafafa 39px,#eee 39px,#eee 40px)}
.hscroll{height:17px;margin-top:2px;background:#f0f0f0;padding:7px 0 0 17px}
.hthumb{width:174px;height:2px;background:#808080}
.sash{height:5px;background:#d0d0d0;border:1px solid #a8a8a8;flex:none}
.acc{height:24px;border-bottom:2px solid #ccc;display:flex;align-items:center;justify-content:space-between;padding:0 6px 2px 7px;font-size:14px;color:#3a9ad0;flex:none}
.chev{width:12px;height:8px}

/* viewport */
.view{flex:1;position:relative;border:1px solid #c04444;background:linear-gradient(#b5b6b8 0,#c6c7c7 30%,#e2e3e4 70%,#e8e9eb 100%);overflow:hidden}
.scene{display:block;width:100%;height:100%}
.c-b,.c-g,.c-r{font:34px "Liberation Sans",sans-serif}
.c-b{fill:#3060f0}.c-g{fill:#30a040}.c-r{fill:#e83040}
.t-b,.t-g,.t-r{font:30px "Liberation Sans",sans-serif}
.t-b{fill:#3050e0}.t-g{fill:#209030}.t-r{fill:#d03030}

/* dialog */
.dlg{position:absolute;left:58px;top:70px;width:328px;height:491px;display:flex;flex-direction:column;border:1px solid #aab;border-top:0;background:#e8e8e8}
.dlg-head{height:24px;background:#5f8a82;color:#fff;display:flex;align-items:center;font-size:13px;padding:0 7px 2px;margin:0 -1px;flex:none}
.dlg-gear{width:14px;height:14px;margin:2px 10px 0 1px}
.dlg-x{width:11px;height:11px;margin:2px 3px 0 auto}
.dlg-body{padding:4px 5px 0;display:flex;flex-direction:column;gap:4px}
.sec{background:#fff;border-bottom:2px solid #ccc;padding:0 9px 6px}
.sec-t{height:26px;margin:0 0 4px -2px;display:flex;align-items:center;justify-content:space-between;color:#3a9ad0;font-size:14px;padding-bottom:2px}
.up{width:11px;height:7px;margin:2px -2px 0 0}
.sel{height:25px;border:1px solid #b0b0b0;display:flex;align-items:center;justify-content:space-between;padding:0 4px 1px;font-size:12.700px}
.sel .caret{border-left-width:3.500px;border-right-width:3.500px}
.lib{height:32px;display:flex;justify-content:space-between;font-size:12px;line-height:22px}
.lib-b{margin-top:2px;line-height:32px}
.libbtn{width:32px;height:32px;border:1px solid #b0b0b0;background:#fff}
.libsvg{width:30px;height:30px}
.subs{display:grid;grid-template-columns:repeat(6,34px);margin-left:48px;height:68px;align-content:start;margin-top:5px}
.sub{height:33px;width:32px;display:flex;align-items:center;justify-content:center;margin-bottom:1px}
.sub svg{width:24px;height:26px}
.sub-on{background:#c7d6d4;border:1px solid #aebfbd}
.posrow{display:flex;justify-content:space-between;align-items:center;font-size:13px}
.sel-m{width:141px}
.inp{height:23px;border:1px solid #b0b0b0;padding:2px 0 0 5px;font-size:12.700px;line-height:17px}
.selected{display:inline-block;background:#0078d7;color:#eaf4ff;height:17px;width:49px}
.btns{display:flex;justify-content:flex-end;gap:5px;padding:8px 10px 0 0}
.btn{width:54px;height:25px;background:#c4c6ca;border:1px solid #aeb0b4;text-align:center;font-size:12.500px;line-height:23px}
.btn-ok{background:#9ccde8;border-color:#4e9cc8}

/* status */
.status{height:21px;position:relative;font-size:11px;line-height:20px;padding-left:3px;font-weight:500;flex:none;border-top:1px solid #aaa;margin-top:-1px}
.wm{position:absolute;right:15px;top:3px;color:#888;font:12px "Liberation Sans",sans-serif}
.wm-i{position:absolute;left:21px;top:-6px;width:15px;height:15px}
.taskbar{height:10px;background:linear-gradient(90deg,#d4e8c8 0,#dce8d0 40%,#dcdcdc 100%);flex:none}
```
